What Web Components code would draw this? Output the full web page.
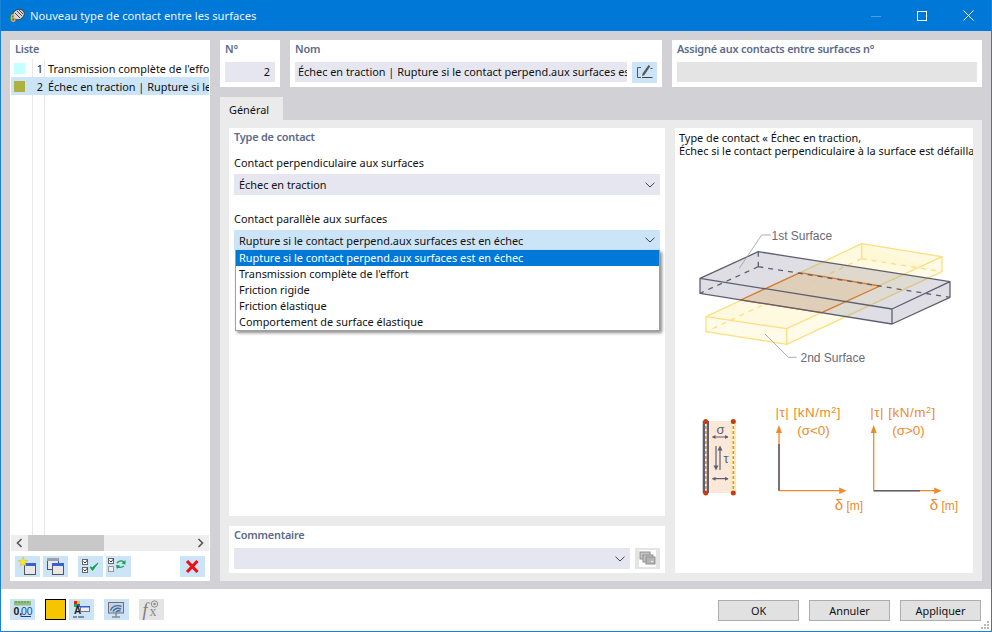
<!DOCTYPE html>
<html lang="fr"><head><meta charset="utf-8"><title>Nouveau type de contact</title>
<style>
html,body{margin:0;padding:0;background:#fff}
body{font:10.9px "Noto Sans","Open Sans","Liberation Sans",sans-serif;color:#111}
</style></head><body>
<rf-window>
  <rf-titlebar slot="title" text="Nouveau type de contact entre les surfaces"></rf-titlebar>
  <rf-list slot="list"></rf-list>
  <rf-panel slot="top" label="N°" style="width:60px"><rf-field align="right" value="2"></rf-field></rf-panel>
  <rf-panel slot="top" label="Nom" style="width:372px">
    <div style="display:flex;gap:5px"><rf-field style="flex:1;min-width:0" value="Échec en traction | Rupture si le contact perpend.aux surfaces est en échec"></rf-field><rf-icon name="edit"></rf-icon></div>
  </rf-panel>
  <rf-panel slot="top" label="Assigné aux contacts entre surfaces n°" style="flex:1"><rf-field tone="off" value=""></rf-field></rf-panel>
  <rf-tab slot="tab" text="Général"></rf-tab>
  <rf-general slot="left"></rf-general>
  <rf-panel slot="left" label="Commentaire" style="height:47px;flex:none">
    <div style="display:flex;gap:5px"><rf-combo style="flex:1;min-width:0;height:21px"></rf-combo><rf-icon name="lib" tone="off"></rf-icon></div>
  </rf-panel>
  <rf-diagram slot="right"></rf-diagram>
  <rf-footer slot="footer"></rf-footer>
</rf-window>
<script>
const ICONS={
edit:`<path d="M9 5.500H5.500V15.500H9" fill="none" stroke="#555"/><path d="M10 15.500h10.500" stroke="#444"/><path d="M16.500 3l1.800 1.200-5.800 8.800-2.300 1.300.2-2.600z" fill="#5a5a5a"/><path d="M18.500 6.500h2" stroke="#555"/>`,
lib:`<rect x="4" y="2" width="17" height="17" fill="#fff"/><rect x="5" y="4" width="10" height="7" fill="#c4c4c4" stroke="#8f8f8f"/><rect x="8" y="7" width="10" height="7" fill="#c4c4c4" stroke="#8f8f8f"/><rect x="11" y="9" width="9" height="7" fill="#b4b4b4" stroke="#8f8f8f"/><path d="M16 13l2 1" stroke="#fff"/>`,
new:`<rect x="9.500" y="7.500" width="11" height="11" fill="#e8e8e8" stroke="#555"/><rect x="9" y="7" width="12" height="3" fill="#3a5fd0"/><path d="M8 1l1.300 3.300 3.500.2-2.700 2.200.9 3.400L8 8.200 5 10.100l.9-3.400L3.200 4.500l3.500-.2z" fill="#f8e830" stroke="#d0b820" stroke-width=".5"/>`,
copy:`<rect x="4.500" y="2.500" width="11" height="11" fill="#e8e8e8" stroke="#555"/><rect x="4" y="2" width="12" height="3" fill="#9aa0b0"/><rect x="9.500" y="7.500" width="11" height="11" fill="#e8e8e8" stroke="#555"/><rect x="9" y="7" width="12" height="3" fill="#3a5fd0"/>`,
check:`<rect x="4.500" y="3.500" width="5" height="5" fill="#fff" stroke="#666"/><path d="M5.500 5.500l1.500 1.500 2.500-3" fill="none" stroke="#333"/><rect x="4.500" y="11.500" width="5" height="5" fill="#fff" stroke="#666"/><path d="M5.500 13.500l1.500 1.500 2.500-3" fill="none" stroke="#333"/><path d="M12 11l2.500 3.500L20 7l-5.500 4.500z" fill="#18a050" stroke="#18a050"/>`,
swap:`<rect x="2.500" y="2.500" width="5" height="5" fill="#fff" stroke="#666"/><path d="M3.500 4.500l1.500 1.500 2.500-3" fill="none" stroke="#333"/><rect x="2.500" y="10.500" width="5" height="5" fill="#eee" stroke="#999"/><path d="M11 7c2-2.500 5-2.500 7-1M11 10.500c3 1.500 5 1 7-.5" fill="none" stroke="#20a050" stroke-width="1.400"/><path d="M19.500 4v4.500l-4-1zM10 9l4 .5-3 3.500z" fill="#20a050"/>`,
del:`<path d="M7 5l10.500 11M17.500 5L7 16" stroke="#f01010" stroke-width="3.200" fill="none"/>`,
num:`<rect x="4" y="2" width="17" height="4.500" fill="#8fc07a"/><path d="M6 2v2M9 2v2M12 2v2M15 2v2M18 2v2" stroke="#5a9048"/><text x="3.500" y="15.500" font-family="Liberation Sans" font-size="10.500" font-weight="700" fill="#222">0,</text><text x="11" y="15.500" font-family="Liberation Sans" font-size="10.500" fill="#1c3f9c">00</text><path d="M11 17.500h10" stroke="#1c3f9c"/>`,
color:`<rect x="5" y="2" width="3" height="3" fill="#e02020"/><rect x="8" y="2" width="3" height="3" fill="#e8c820"/><rect x="5" y="5" width="3" height="3" fill="#30a040"/><rect x="8" y="5" width="3" height="3" fill="#3050d0"/><text x="5" y="15" font-family="Liberation Sans" font-size="10" font-weight="700" fill="#222">A</text><path d="M5 17v2M7 17v2M10 17v2M12 17v2M14 17v2" stroke="#333"/><rect x="11.500" y="7.500" width="9" height="5" fill="#eee" stroke="#777"/><rect x="11" y="7" width="10" height="1.500" fill="#3a5fd0"/>`,
screen:`<rect x="4.500" y="3.500" width="15" height="10.500" fill="#c9d2de" stroke="#707070"/><path d="M6.500 11.500c1.500-4.500 6-6 11-4M9 12.500c1.500-3 4.500-4 8-2.500M12 13c1-1 3-1.500 4.500-1" fill="none" stroke="#3e6fa8" stroke-width="1.400"/><path d="M12 14v3.500M8 18h8" stroke="#606060"/>`,
fx:`<text x="3.500" y="17" font-family="Liberation Serif" font-style="italic" font-size="18" fill="#7c7c7c">f</text><text x="10.500" y="17" font-family="Liberation Serif" font-size="14" fill="#8c8c8c">x</text><circle cx="15.500" cy="5" r="3.200" fill="none" stroke="#8c8c8c"/><circle cx="15.500" cy="5" r="1.300" fill="#8c8c8c"/>`
};
function def(name,css,html,setup){
  customElements.define(name,class extends HTMLElement{
    connectedCallback(){
      if(this.shadowRoot)return;
      const r=this.attachShadow({mode:'open'});
      r.innerHTML=`<style>${css}</style>`+(typeof html==='function'?html(this):html);
      if(setup)setup(this,r);
    }
  });
}
const CHEV=`<svg width="10" height="6" viewBox="0 0 10 6"><path d="M.5.700L5 5 9.500.700" fill="none" stroke="#444" stroke-width="1"/></svg>`;
const FONT=`font-family:"Noto Sans","Open Sans","Liberation Sans",sans-serif;font-size:10.9px`;
const HEAD=`color:#5b6b8c;font-weight:600;letter-spacing:-.2px`;

def('rf-window',`:host{display:flex;flex-direction:column;width:992px;height:632px;box-sizing:border-box;border:1px solid #1a82d8;border-top:0;background:#fff;${FONT};overflow:hidden}
.main{height:558px;flex:none;box-sizing:border-box;background:#d2d1d6;padding:9px 9px 8px;display:flex;gap:10px}
.side{display:flex;width:200px;flex:none}
.content{flex:1;min-width:0;display:flex;flex-direction:column}
.top{display:flex;gap:10px;height:47px;flex:none;margin-bottom:10px}
.tabs{display:flex;height:23px;flex:none}
.page{flex:1;min-height:0;background:#ebebeb;padding:8px 9px;display:flex;gap:10px}
.left{width:436px;flex:none;display:flex;flex-direction:column;gap:10px}
.right{flex:1;display:flex;min-width:0}
`,`<slot name="title"></slot>
<div class="main"><div class="side"><slot name="list"></slot></div>
<div class="content"><div class="top"><slot name="top"></slot></div>
<div class="tabs"><slot name="tab"></slot></div>
<div class="page"><div class="left"><slot name="left"></slot></div><div class="right"><slot name="right"></slot></div></div></div></div>
<slot name="footer"></slot>`);

def('rf-titlebar',`:host{display:flex;align-items:center;height:31px;flex:none;background:#0078d7;color:#eaf3fb;font-family:"Noto Sans",sans-serif;font-size:11.2px;margin:0 -1px 0 -1px;padding-left:10px}
.t{margin-left:5px;white-space:nowrap;flex:1;padding-bottom:1px}
.c{display:flex;align-items:center;justify-content:center;width:46px;height:31px}
svg{display:block}`,
h=>`<svg width="15" height="15" viewBox="0 0 15 15"><ellipse cx="8.500" cy="6.500" rx="6" ry="5" fill="#d8d8dc" stroke="#444" transform="rotate(-30 8.500 6.500)"/><path d="M5 5l5 5M7 3l5 5M9 2l4 4" stroke="#444"/><text x="0" y="14" font-family="Liberation Sans" font-size="10" font-weight="700" fill="#f0b020">6</text></svg>
<div class="t">${h.getAttribute('text')}</div>
<div class="c"><svg width="10" height="10" viewBox="0 0 10 10"><path d="M0 5.500h10" stroke="#4c9fe4"/></svg></div>
<div class="c"><svg width="10" height="10" viewBox="0 0 10 10"><rect x=".5" y=".5" width="9" height="9" fill="none" stroke="#fff"/></svg></div>
<div class="c" style="margin-right:1px"><svg width="11" height="11" viewBox="0 0 11 11"><path d="M.5.500l10 10M10.500.500l-10 10" stroke="#fff"/></svg></div>`);

def('rf-panel',`:host{display:block;box-sizing:border-box;background:#fff;padding:0 5px;flex:none}
.h{${HEAD};height:22px;line-height:18px}`,
h=>`<div class="h">${h.getAttribute('label')}</div><slot></slot>`);

def('rf-field',`:host{display:block;height:20px;line-height:20px;background:#e6e6f0;overflow:hidden;white-space:nowrap;padding:0 3px;box-sizing:border-box}
:host([align=right]){text-align:right;padding-right:5px}
:host([tone=off]){background:#e4e4e4}`,h=>h.getAttribute('value'));

def('rf-icon',`:host{display:block;width:25px;height:21px;background:#cce4f8;flex:none}
:host([tone=off]){background:#e4e4e4}
svg{display:block}`,h=>`<svg width="25" height="21" viewBox="0 0 25 21">${ICONS[h.getAttribute('name')]}</svg>`);

def('rf-combo',`:host{display:flex;align-items:center;height:21px;background:#e6e6f0;padding:0 5px;box-sizing:border-box;white-space:nowrap}
:host([active]){background:#cce4f8;height:20px}
.t{flex:1;min-width:0;overflow:hidden}
svg{display:block}`,h=>`<div class="t">${h.getAttribute('value')||''}</div>${CHEV}`);

def('rf-tab',`:host{display:block;width:63px;background:#ebebeb;box-sizing:border-box;padding-left:9px;line-height:25px}`,h=>h.getAttribute('text'));

def('rf-list',`:host{display:flex;flex-direction:column;width:200px;background:#fff;box-sizing:border-box}
.h{${HEAD};height:19px;line-height:18px;padding-left:5px}
.body{flex:1;min-height:0;position:relative;margin:0 1px;overflow:hidden}
.lines{display:grid;grid-template-columns:21px 1px 11px 1px 1fr;height:100%}
.lines i:nth-child(2),.lines i:nth-child(4){background:#e8e8e8}
.rows{display:flex;flex-direction:column;position:absolute;inset:0}
.r{display:flex;height:18px;flex:none;align-items:center;white-space:nowrap;overflow:hidden}
.r.s{background:#cce4f8}
.sw{width:11px;height:11px;margin-left:3px;margin-right:7px;flex:none}
.n{width:11px;text-align:right;flex:none}
.x{margin-left:5px}
.sb{display:flex;height:16px;margin:0 1px;background:#eee;align-items:center;flex:none}
.thumb{width:76px;height:16px;background:#c8c8c8}
.sp{flex:1}
.tb{display:flex;height:21px;padding:5px 5px 4px;flex:none}
.tb rf-icon{margin-right:3px}
svg{display:block}
.a{width:17px;display:flex;justify-content:center}`,
`<div class="h">Liste</div>
<div class="body"><div class="lines"><i></i><i></i><i></i><i></i><i></i></div>
<div class="rows">
<div class="r"><span class="sw" style="background:#c4ffff"></span><span class="n">1</span><span class="x">Transmission complète de l'effort</span></div>
<div class="r s"><span class="sw" style="background:#aeb040"></span><span class="n">2</span><span class="x">Échec en traction | Rupture si le contact perpend.aux surfaces</span></div>
</div></div>
<div class="sb"><div class="a"><svg width="7" height="10" viewBox="0 0 7 10"><path d="M5.500 1L1.500 5l4 4" fill="none" stroke="#555" stroke-width="1.600"/></svg></div><div class="thumb"></div><div class="sp"></div><div class="a"><svg width="7" height="10" viewBox="0 0 7 10"><path d="M1.500 1l4 4-4 4" fill="none" stroke="#555" stroke-width="1.600"/></svg></div></div>
<div class="tb"><rf-icon name="new"></rf-icon><rf-icon name="copy" style="margin-right:10px"></rf-icon><rf-icon name="check"></rf-icon><rf-icon name="swap"></rf-icon><span class="sp"></span><rf-icon name="del" style="margin-right:0"></rf-icon></div>`);

def('rf-general',`:host{display:flex;flex-direction:column;flex:1;min-height:0;background:#fff;padding:0 5px;box-sizing:border-box;position:relative}
.h{${HEAD};height:22px;line-height:18px}
.l{height:24px;line-height:26px}
.gap{height:11px}
.dd{position:absolute;left:6px;top:122px;width:425px;height:81px;box-sizing:border-box;background:#fff;border:1px solid #a0a0a0;border-top:0;box-shadow:2px 2px 3px rgba(0,0,0,.45);white-space:nowrap}
.o{height:16px;line-height:16px;padding-left:3px}
.o.s{background:#0078d7;color:#fff}`,
`<div class="h">Type de contact</div>
<div class="l">Contact perpendiculaire aux surfaces</div>
<rf-combo value="Échec en traction"></rf-combo>
<div class="gap"></div>
<div class="l">Contact parallèle aux surfaces</div>
<rf-combo active value="Rupture si le contact perpend.aux surfaces est en échec"></rf-combo>
<div class="dd"><div class="o s">Rupture si le contact perpend.aux surfaces est en échec</div><div class="o">Transmission complète de l'effort</div><div class="o">Friction rigide</div><div class="o">Friction élastique</div><div class="o">Comportement de surface élastique</div></div>`);

def('rf-diagram',`:host{display:block;flex:1;background:#fff;overflow:hidden;min-width:0}
.t{height:30px;box-sizing:border-box;padding:3px 0 0 4px;line-height:13px;white-space:nowrap;overflow:hidden}
svg{display:block}
text{font-family:"Liberation Sans",sans-serif}`,
`<div class="t">Type de contact « Échec en traction,<br>Échec si le contact perpendiculaire à la surface est défaillant »</div>
<svg width="298" height="415" viewBox="675 158 298 415">
<g fill="none" stroke-linejoin="round">
<path d="M706 316.700L861.700 243.700 942 256.700 786.700 328.700z" fill="#fff9df"/>
<path d="M706 316.700V331.700L786.700 344.300V328.700zM786.700 328.700V344.300L942 271.700V256.700z" fill="#fffbe8"/>
<path d="M861.700 243.700V258.700L942 271.700" fill="#fff6d0" fill-opacity=".6"/>
<path d="M706 316.700L861.700 243.700 942 256.700V271.700L786.700 344.300 706 331.700zM706 316.700L786.700 328.700 942 256.700M786.700 328.700V344.300M861.700 243.700V258.700" stroke="#fbdf80" stroke-width="1.300"/>
<path d="M861.700 258.700L942 271.700M861.700 258.700L706 331.700" stroke="#fbdf80" stroke-width="1.300" stroke-dasharray="5 5"/>
<path d="M700 278.300L758.300 251.700 950 281.700 892 309zM700 278.300V293.300L892 324V309zM892 324L950 297.300V281.700L892 309z" fill="#7d7d92" fill-opacity=".25"/>
<path d="M800 272.700L880 286 821.700 312.700 740.700 300z" fill="#e0cdb4" fill-opacity=".85" stroke="#d87a30" stroke-width="1.300"/>
<path d="M700 278.300L758.300 251.700 950 281.700V297.300L892 324 700 293.300zM700 278.300L892 309 950 281.700M892 309V324" stroke="#5f5f72" stroke-width="1.300"/>
<path d="M758.300 251.700V266.700M758.300 266.700L950 297.300M758.300 266.700L700 293.300" stroke="#5f5f72" stroke-width="1.300" stroke-dasharray="5 5"/>
<path d="M771 235H761.700L739.300 268.300M765 334L788.300 357.300H796.700" stroke="#9a9aa4" stroke-width=".8"/>
</g>
<text x="771.500" y="239.500" font-size="12" fill="#6b6b78">1st Surface</text>
<text x="800.500" y="361.700" font-size="12" fill="#6b6b78">2nd Surface</text>
<rect x="706" y="421" width="27.300" height="72" fill="#fce8d8"/>
<rect x="702.700" y="421" width="6.300" height="72" fill="#5f5f72"/>
<rect x="730.700" y="421" width="5.300" height="72" fill="#fde9a8"/>
<path d="M705.900 421V493M733.300 421V493" stroke="#fff" stroke-width="1.600"/>
<path d="M705.900 421V493M733.300 421V493" stroke="#ef8a2c" stroke-width="1.600" stroke-dasharray="3 2"/>
<g fill="#c83c10"><circle cx="705.700" cy="421.500" r="2.500"/><circle cx="705.700" cy="493" r="2.500"/><circle cx="733.300" cy="421.500" r="2.500"/><circle cx="733.300" cy="493" r="2.500"/></g>
<text x="720.500" y="434" font-size="13" fill="#5f5f72" text-anchor="middle">σ</text>
<text x="726" y="463" font-size="13" fill="#5f5f72" text-anchor="middle">τ</text>
<g stroke="#5f5f72" fill="#5f5f72" stroke-width="1.200">
<path d="M712.500 437H728M712.500 478.700H728"/>
<path d="M712 437l3.500-2v4zM728.500 437l-3.500-2v4zM712 478.700l3.500-2v4zM728.500 478.700l-3.500-2v4z" stroke="none"/>
<path d="M716 446V467M720 449V470"/>
<path d="M716 470.500l-2.500-5h5zM720 445.500l-2.500 5h5z" stroke="none"/>
</g>
<g stroke="#ef8a2c" fill="none" stroke-width="1.300">
<path d="M779 490.700V431M779 490.700H842M873.700 490.700V431M873.700 490.700H937"/>
</g>
<path d="M779 425l-3 8h6zM846.700 490.700l-7.500-3.200v6.400zM873.700 425l-3 8h6zM941.700 490.700l-7.500-3.200v6.400z" fill="#ef8a2c"/>
<path d="M779 444V490.700M873.700 490.700H920" stroke="#5f5f72" stroke-width="1.600" fill="none"/>
<g fill="#ef8a2c" font-size="13.500" text-anchor="middle">
<text x="808.300" y="417" letter-spacing=".5">|τ| [kN/m<tspan font-size="9" dy="-4">2</tspan><tspan dy="4">]</tspan></text>
<text x="813.500" y="435">(σ&lt;0)</text>
<text x="903" y="417" letter-spacing=".5">|τ| [kN/m<tspan font-size="9" dy="-4">2</tspan><tspan dy="4">]</tspan></text>
<text x="908.500" y="435">(σ&gt;0)</text>
<text x="849" y="510" font-size="12"><tspan font-size="15">δ</tspan> [m]</text>
<text x="944" y="510" font-size="12"><tspan font-size="15">δ</tspan> [m]</text>
</g>
</svg>`);

def('rf-button',`:host{display:flex;align-items:center;justify-content:center;width:81px;height:21px;box-sizing:border-box;background:#e1e1e1;border:1px solid #adadad;flex:none}`,'<slot></slot>');

def('rf-footer',`:host{display:flex;align-items:flex-start;flex:1;min-height:0;background:#fff;padding:10px 10px 0 9px;position:relative}
.i{display:flex}
.sw{width:19px;height:19px;border:1px solid #000;background:#f7c400;margin:0 3px 0 10px;flex:none}
.sp{flex:1}
.b{display:flex;gap:10px;margin-top:1px}
.grip{position:absolute;right:2px;bottom:2px}`,
`<div class="i"><rf-icon name="num"></rf-icon><div class="sw"></div><rf-icon name="color"></rf-icon><rf-icon name="screen" style="margin-left:10px"></rf-icon><rf-icon name="fx" tone="off" style="margin-left:10px"></rf-icon></div>
<div class="sp"></div>
<div class="b"><rf-button>OK</rf-button><rf-button>Annuler</rf-button><rf-button>Appliquer</rf-button></div>
<svg class="grip" width="8" height="8" viewBox="0 0 8 8" fill="#b8b8b8"><rect x="6" y="0" width="2" height="2"/><rect x="3" y="3" width="2" height="2"/><rect x="6" y="3" width="2" height="2"/><rect x="0" y="6" width="2" height="2"/><rect x="3" y="6" width="2" height="2"/><rect x="6" y="6" width="2" height="2"/></svg>`);
</script>
</body></html>
